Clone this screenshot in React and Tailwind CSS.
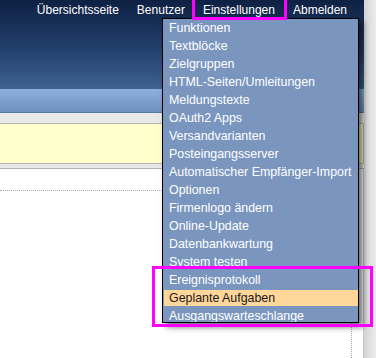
import React from "react";

const items = [
  "Funktionen",
  "Textblöcke",
  "Zielgruppen",
  "HTML-Seiten/Umleitungen",
  "Meldungstexte",
  "OAuth2 Apps",
  "Versandvarianten",
  "Posteingangsserver",
  "Automatischer Empfänger-Import",
  "Optionen",
  "Firmenlogo ändern",
  "Online-Update",
  "Datenbankwartung",
  "System testen",
  "Ereignisprotokoll",
  "Geplante Aufgaben",
  "Ausgangswarteschlange",
];

export default function App() {
  return (
    <div
      className="relative flex w-[376px] h-[358px] overflow-hidden bg-[#e6e6e6] text-[12px]"
      style={{ fontFamily: '"Liberation Sans", Arial, sans-serif' }}
    >
      <div className="flex flex-col w-[364px] h-full">
        <div className="h-[89px] bg-gradient-to-b from-[#0e2143] via-[#213e69] to-[#3d6292]">
          <nav className="flex justify-end gap-[18px] pr-[17px] h-5 items-center text-white leading-5">
            <span>Übersichtsseite</span>
            <span>Benutzer</span>
            <span>Einstellungen</span>
            <span>Abmelden</span>
          </nav>
        </div>
        <div className="h-[24px] bg-gradient-to-b from-[#8eb0e0] to-[#6e90c1] border-b border-[#5577a9]"></div>
        <div className="h-[11px] bg-[#e8e8e8] border-b border-[#b4b4b4]"></div>
        <div className="h-[40px] bg-[#ffffcc] border-b border-[#b4b4b4] border-r"></div>
        <div className="h-[5px] bg-[#e8e8e8] border-b border-[#b4b4b4]"></div>
        <div className="flex-1 bg-white border-r border-[#c8c8c8] pt-[21px] pr-[11px]">
          <div className="h-full border-t border-r border-dotted border-[#a8a8a8]"></div>
        </div>
      </div>
      <div className="w-[12px] h-full bg-gradient-to-r from-[#d4d4d4] to-[#ececec]"></div>

      <div className="absolute left-[162px] top-[18px] w-[197px] h-[305px] overflow-hidden border border-black bg-[#7a96bf] pl-px pt-px flex flex-col gap-[2px] shadow-[4px_4px_6px_rgba(0,0,0,0.55)]">
        {items.map((t) => (
          <div
            key={t}
            className={
              "shrink-0 h-4 leading-4 pl-[5px] whitespace-nowrap text-[12.4px] " +
              (t === "Geplante Aufgaben" ? "bg-[#ffd699] text-[#1a1a1a]" : "text-white")
            }
          >
            {t}
          </div>
        ))}
      </div>

      <div className="absolute left-[192px] top-[-3px] w-[95px] h-[23px] border-[3px] border-[#ff00ff]"></div>
      <div className="absolute left-[152px] top-[266px] w-[221px] h-[61px] border-[3px] border-[#ff00ff]"></div>
    </div>
  );
}
